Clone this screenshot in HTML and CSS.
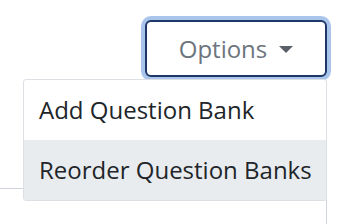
FILE: index.html
```html
<!DOCTYPE html>
<html lang="en">
<head>
  <meta charset="UTF-8" />
  <meta name="viewport" content="width=device-width, initial-scale=1.0">
  <title>Question Banks</title>
  <link rel="stylesheet" href="styles.css">
</head>
<body>
  <div class="toolbar">
    <div class="dropdown">
      <button class="btn-options">Options <span class="caret"></span></button>
      <div class="menu">
        <a class="menu-item" href="#">Add Question Bank</a>
        <a class="menu-item active" href="#">Reorder Question Banks</a>
      </div>
    </div>
  </div>
  <div class="panel"></div>
</body>
</html>
```

FILE: styles.css
```css
body { margin: 0; width: 350px; height: 224px; overflow: hidden; background: #fff; font-family: "Open Sans", sans-serif; }
.toolbar { box-sizing: border-box; height: 188px; display: flex; justify-content: flex-end; padding: 20px 23px 0 0; }
.dropdown { position: relative; }
.btn-options { box-sizing: border-box; width: 182px; height: 57px; display: flex; align-items: center; justify-content: center; gap: 12px; padding: 0; border: 2px solid #1d3768; border-radius: 6px; box-shadow: 0 0 0 4px #a9c5ec; background: #fff; color: #6c757d; font-family: "Open Sans", sans-serif; font-size: 24px; cursor: pointer; }
.caret { width: 0; height: 0; border-top: 7px solid #5a6068; border-left: 7px solid transparent; border-right: 7px solid transparent; margin-top: 2px; }
.menu { position: absolute; top: 59px; right: 0; width: 304px; box-sizing: border-box; background: #fff; border: 1px solid #dcdfe3; border-radius: 3px; z-index: 2; }
.menu-item { display: block; padding: 12px 15px; line-height: 36px; font-size: 24px; color: #212529; text-decoration: none; white-space: nowrap; }
.menu-item.active { background: #e9ecef; }
.panel { width: 327px; height: 36px; box-sizing: border-box; border-top: 1px solid #cfd4da; border-right: 1px solid #cfd4da; }
```
